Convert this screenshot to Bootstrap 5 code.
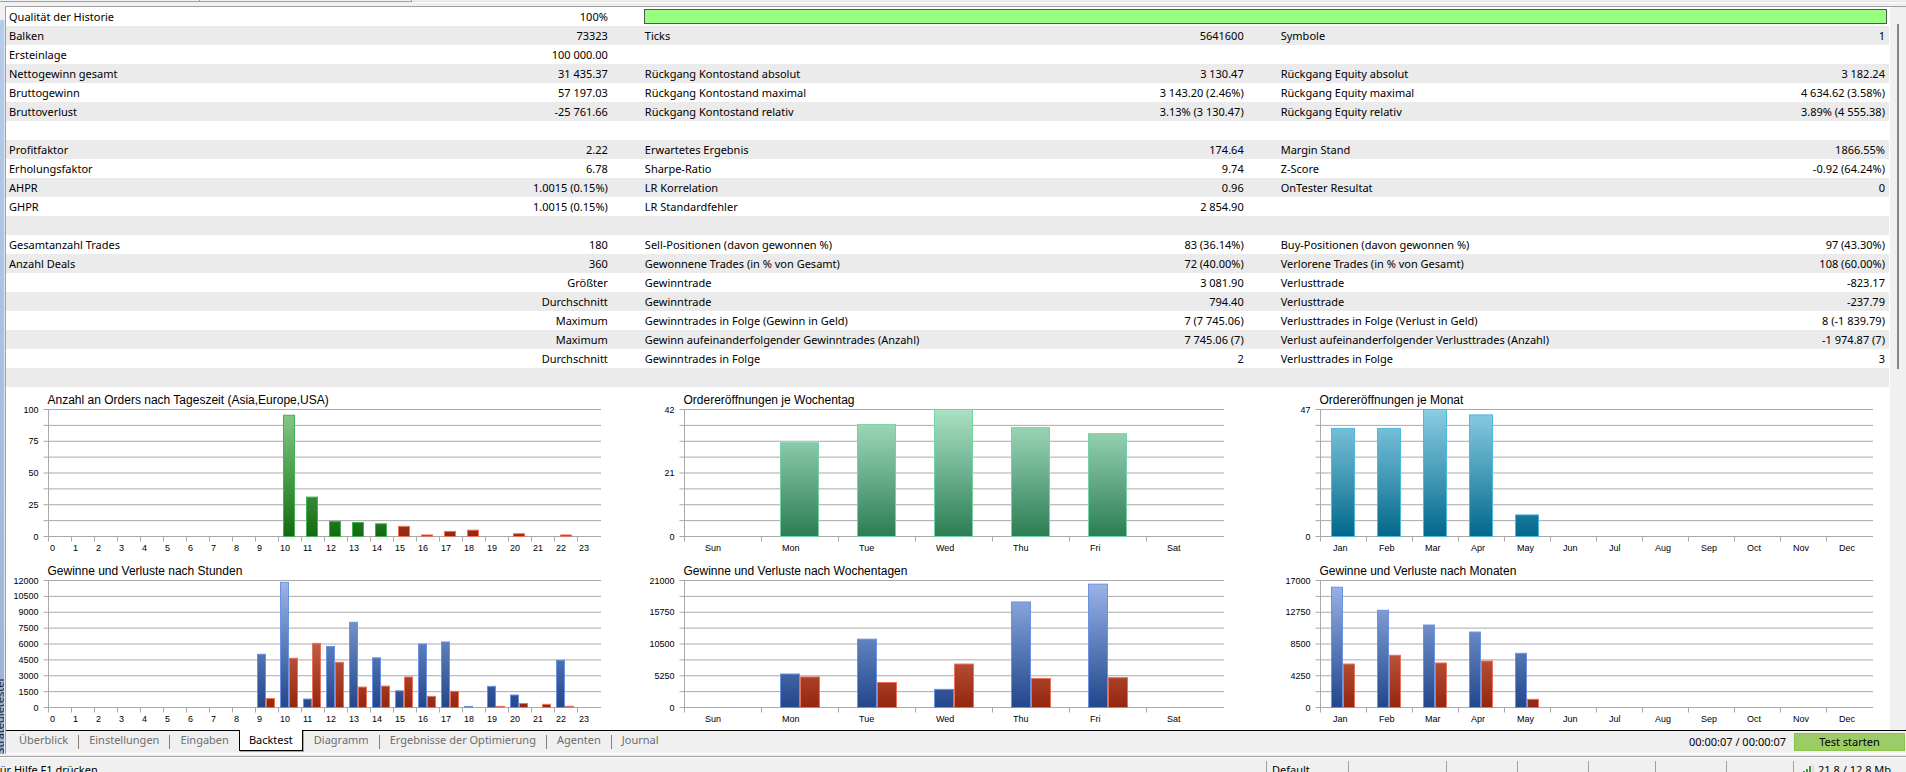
<!DOCTYPE html>
<html lang="de">
<head>
<meta charset="utf-8">
<meta name="viewport" content="width=device-width, initial-scale=1">
<title>Strategietester – Backtest</title>
<link href="https://cdn.jsdelivr.net/npm/bootstrap@5.3.0/dist/css/bootstrap.min.css" rel="stylesheet">
<style>
  :root { --face: #f0f0f0; --line: #a0a0a0; --ui: "Noto Sans", "Open Sans", sans-serif; }
  body { background: var(--face); color: #000; font-family: var(--ui); font-size: 11px; line-height: 19px; overflow: hidden; }
  .top-strip { height: 6px; }
  .top-strip .strip-tab { height: 2px; border-bottom: 1px solid var(--line); border-right: 1px solid var(--line); }
  .top-strip .tab-a { width: 200px; }
  .top-strip .tab-b { width: 212px; }
  .top-strip .strip-rest { height: 3px; border-bottom: 1px solid #fff; box-shadow: inset 0 -1px #e0e0e0; }
  .side-title { width: 5px; margin-top: 14px; border-right: 1px solid #dfe6ee; background: linear-gradient(#b4cdec, #a5bedd 60%, #9bb3d1); overflow: hidden; }
  .side-title span { writing-mode: vertical-rl; transform: rotate(180deg); white-space: nowrap; color: #10243c; margin-left: -10px; }
  .tester { min-width: 0; border-left: 1px solid var(--line); border-top: 1px solid var(--line); }
  .report-sheet { background: #fff; min-width: 0; padding-bottom: 1px; }
  .stats { table-layout: fixed; width: 100%; margin: 0; border-right: 1px solid #fff; border-collapse: collapse; }
  .stats tr:nth-child(even) { background: #ebebeb; }
  .stats td { height: 19px; padding: 0 0 0 3px; white-space: nowrap; overflow: visible; }
  .stats td.num { text-align: right; padding: 0 34px 0 0; }
  .stats tr:not(:first-child) td.num:last-child { padding-right: 4px; }
  .stats td.quality { padding: 0 2px; }
  .quality .progress { height: 15px; border: 1px solid #555; border-radius: 0; background: #fff; }
  .quality .progress-bar { background: #98ff80; }
  .c-label { width: 20%; }
  .c-num { width: 13.76%; }
  .c-last { width: 12.48%; }
  .chart-col { width: 33.76%; }
  .chart-col:last-child { width: 32.48%; }
  .plot { display: block; width: 100%; height: 171px; font-family: "Liberation Sans", Arial, sans-serif; font-size: 9px; }
  .plot .plot-title { font-size: 12px; }
  .scroll-track { width: 16px; padding: 17px 7px 0; background: var(--face); }
  .scroll-thumb { height: 345px; width: 2px; background: #868686; }
  .tab-row { height: 24px; border-top: 1px solid #000; border-bottom: 1px solid #fff; padding-left: 2px; }
  .tab-row ul { margin: 0; height: 20px; }
  .tab-row a { display: block; position: relative; padding: 0 10px 0 11px; color: #6d6d6d; text-decoration: none; line-height: 18px; height: 20px; }
  .tab-row li + li a::before { content: ""; position: absolute; left: 0; top: 4px; width: 1px; height: 14px; background: #808080; }
  .tab-row li a.active { background: #fff; color: #000; border: 1px solid #000; border-top: 0; margin-top: -1px; height: 21px; padding: 1px 9px 0; box-shadow: 1px 1px #a8a8a8; }
  .tab-row li a.active::before, .tab-row li.after-active a::before { display: none; }
  .start-btn { width: 111px; height: 18px; margin: 2px 1px 0 0; padding: 0; border: 1px solid #8bc34a; border-radius: 0; background: #9ccc65; color: #000; line-height: 16px; }
  .clock { line-height: 21px; }
  .status-bar { height: 26px; margin-top: 2px; border-top: 1px solid var(--line); box-shadow: inset 0 1px #fff; padding-top: 4px; line-height: 18px; }
  .status-bar > div { border-left: 1px solid var(--line); height: 22px; padding-left: 5px; white-space: nowrap; flex-shrink: 0; }
  .status-bar > .hint { border: 0; padding: 0; }
  .hint span { display: block; margin-left: -6px; }
  .pane-s { width: 67px; }
  .pane-m { width: 71px; }
  .pane-l { width: 82px; }
  .pane-xl { width: 98px; }
  .pane-net { width: 113px; }
</style>
</head>
<body>
<div class="top-strip d-flex">
  <div class="strip-tab tab-a"></div>
  <div class="strip-tab tab-b"></div>
  <div class="strip-rest flex-grow-1"></div>
</div>

<main class="d-flex">
  <div class="side-title d-flex flex-column flex-shrink-0 align-items-start justify-content-end"><span>Strategietester</span></div>
  <section class="tester flex-grow-1">
    <div class="d-flex">
      <div class="report-sheet flex-grow-1">
        <table class="stats">
          <colgroup><col class="c-label"><col class="c-num"><col class="c-label"><col class="c-num"><col class="c-label"><col class="c-last"></colgroup>
          <tbody>
            <tr><td>Qualität der Historie</td><td class="num">100%</td><td class="quality" colspan="4"><div class="progress" role="progressbar" aria-label="Qualität der Historie" aria-valuenow="100" aria-valuemin="0" aria-valuemax="100"><div class="progress-bar w-100"></div></div></td></tr>
            <tr><td>Balken</td><td class="num">73323</td><td>Ticks</td><td class="num">5641600</td><td>Symbole</td><td class="num">1</td></tr>
            <tr><td>Ersteinlage</td><td class="num">100 000.00</td><td></td><td></td><td></td><td></td></tr>
            <tr><td>Nettogewinn gesamt</td><td class="num">31 435.37</td><td>Rückgang Kontostand absolut</td><td class="num">3 130.47</td><td>Rückgang Equity absolut</td><td class="num">3 182.24</td></tr>
            <tr><td>Bruttogewinn</td><td class="num">57 197.03</td><td>Rückgang Kontostand maximal</td><td class="num">3 143.20 (2.46%)</td><td>Rückgang Equity maximal</td><td class="num">4 634.62 (3.58%)</td></tr>
            <tr><td>Bruttoverlust</td><td class="num">-25 761.66</td><td>Rückgang Kontostand relativ</td><td class="num">3.13% (3 130.47)</td><td>Rückgang Equity relativ</td><td class="num">3.89% (4 555.38)</td></tr>
            <tr><td colspan="6"></td></tr>
            <tr><td>Profitfaktor</td><td class="num">2.22</td><td>Erwartetes Ergebnis</td><td class="num">174.64</td><td>Margin Stand</td><td class="num">1866.55%</td></tr>
            <tr><td>Erholungsfaktor</td><td class="num">6.78</td><td>Sharpe-Ratio</td><td class="num">9.74</td><td>Z-Score</td><td class="num">-0.92 (64.24%)</td></tr>
            <tr><td>AHPR</td><td class="num">1.0015 (0.15%)</td><td>LR Korrelation</td><td class="num">0.96</td><td>OnTester Resultat</td><td class="num">0</td></tr>
            <tr><td>GHPR</td><td class="num">1.0015 (0.15%)</td><td>LR Standardfehler</td><td class="num">2 854.90</td><td></td><td></td></tr>
            <tr><td colspan="6"></td></tr>
            <tr><td>Gesamtanzahl Trades</td><td class="num">180</td><td>Sell-Positionen (davon gewonnen %)</td><td class="num">83 (36.14%)</td><td>Buy-Positionen (davon gewonnen %)</td><td class="num">97 (43.30%)</td></tr>
            <tr><td>Anzahl Deals</td><td class="num">360</td><td>Gewonnene Trades (in % von Gesamt)</td><td class="num">72 (40.00%)</td><td>Verlorene Trades (in % von Gesamt)</td><td class="num">108 (60.00%)</td></tr>
            <tr><td></td><td class="num">Größter</td><td>Gewinntrade</td><td class="num">3 081.90</td><td>Verlusttrade</td><td class="num">-823.17</td></tr>
            <tr><td></td><td class="num">Durchschnitt</td><td>Gewinntrade</td><td class="num">794.40</td><td>Verlusttrade</td><td class="num">-237.79</td></tr>
            <tr><td></td><td class="num">Maximum</td><td>Gewinntrades in Folge (Gewinn in Geld)</td><td class="num">7 (7 745.06)</td><td>Verlusttrades in Folge (Verlust in Geld)</td><td class="num">8 (-1 839.79)</td></tr>
            <tr><td></td><td class="num">Maximum</td><td>Gewinn aufeinanderfolgender Gewinntrades (Anzahl)</td><td class="num">7 745.06 (7)</td><td>Verlust aufeinanderfolgender Verlusttrades (Anzahl)</td><td class="num">-1 974.87 (7)</td></tr>
            <tr><td></td><td class="num">Durchschnitt</td><td>Gewinntrades in Folge</td><td class="num">2</td><td>Verlusttrades in Folge</td><td class="num">3</td></tr>
            <tr><td colspan="6"></td></tr>
          </tbody>
        </table>
        <div class="d-flex">
          <div class="chart-col"><svg class="plot" id="hourOrders"></svg><svg class="plot" id="hourProfit"></svg></div>
          <div class="chart-col"><svg class="plot" id="dayOrders"></svg><svg class="plot" id="dayProfit"></svg></div>
          <div class="chart-col"><svg class="plot" id="monthOrders"></svg><svg class="plot" id="monthProfit"></svg></div>
        </div>
      </div>
      <div class="scroll-track flex-shrink-0"><div class="scroll-thumb"></div></div>
    </div>

    <nav class="tab-row d-flex">
      <ul class="list-unstyled d-flex">
        <li><a href="#">Überblick</a></li>
        <li><a href="#">Einstellungen</a></li>
        <li><a href="#">Eingaben</a></li>
        <li><a href="#" class="active" aria-current="page">Backtest</a></li>
        <li class="after-active"><a href="#">Diagramm</a></li>
        <li><a href="#">Ergebnisse der Optimierung</a></li>
        <li><a href="#">Agenten</a></li>
        <li><a href="#">Journal</a></li>
      </ul>
      <div class="clock ms-auto me-2">00:00:07 / 00:00:07</div>
      <button type="button" class="start-btn">Test starten</button>
    </nav>
  </section>
</main>

<footer class="status-bar d-flex">
  <div class="hint flex-grow-1"><span>Für Hilfe F1 drücken</span></div>
  <div class="pane-l">Default</div>
  <div class="pane-xl"></div>
  <div class="pane-m"></div>
  <div class="pane-m"></div>
  <div class="pane-s"></div>
  <div class="pane-m"></div>
  <div class="pane-s"></div>
  <div class="pane-net d-flex">
    <svg class="mx-1 mt-1 flex-shrink-0" width="11" height="11" aria-hidden="true"><path d="M0 6h2v5H0zM3 4h2v7H3zM6 1h2v10H6z" fill="#3c9a46"/><path d="M9 0h2v11H9z" fill="#dcdcdc"/></svg>
    <span>21.8 / 12.8 Mb</span>
  </div>
</footer>

<script src="https://cdn.jsdelivr.net/npm/bootstrap@5.3.0/dist/js/bootstrap.bundle.min.js"></script>
<script>
  const NS = 'http://www.w3.org/2000/svg';
  const palettes = {
    green: { stops: ['#8cc88c', '#4aa04c', '#12690f'], edge: '#46b058' },
    mint:  { stops: ['#aae2c2', '#6cb090', '#2b7d52'], edge: '#74d2a4' },
    teal:  { stops: ['#8acde6', '#479cb8', '#01678a'], edge: '#4cb9dc' },
    blue:  { stops: ['#9fb6e8', '#5c7ebc', '#22468a'], edge: '#6a92e2' },
    red:   { stops: ['#e8a08c', '#c05c44', '#96260e'], edge: '#e8725a' }
  };
  const hours = Array.from({ length: 24 }, (_, h) => String(h));
  const days = ['Sun', 'Mon', 'Tue', 'Wed', 'Thu', 'Fri', 'Sat'];
  const months = ['Jan', 'Feb', 'Mar', 'Apr', 'May', 'Jun', 'Jul', 'Aug', 'Sep', 'Oct', 'Nov', 'Dec'];
  const zeros = n => Array(n).fill(0);

  /* labelEvery: a value on every n-th grid line; inset: first bar from slot edge; fill: share of slot covered */
  const charts = [
    { id: 'hourOrders', title: 'Anzahl an Orders nach Tageszeit (Asia,Europe,USA)', cats: hours, max: 100, labelEvery: 2, right: 41, inset: .22, fill: .52, catPad: 2,
      series: [{ hue: 'green', data: [...zeros(10), 95.5, 31, 12, 11, 10] }, { hue: 'red', data: [...zeros(15), 8, 1.2, 4, 5, 0, 2.2, 0, 1.2] }], stacked: true },
    { id: 'hourProfit', title: 'Gewinne und Verluste nach Stunden', cats: hours, max: 12000, labelEvery: 1, right: 41, inset: .07, fill: .78, catPad: 2,
      series: [{ hue: 'blue', data: [...zeros(9), 5030, 11830, 800, 5760, 8050, 4690, 1575, 6000, 6190, 100, 2000, 1180, 0, 4460] },
               { hue: 'red', data: [...zeros(9), 850, 4650, 6060, 4270, 1930, 2020, 2880, 1050, 1530, 0, 110, 380, 300, 110] }] },
    { id: 'dayOrders', title: 'Ordereröffnungen je Wochentag', cats: days, max: 42, labelEvery: 4, right: 54, inset: .24, fill: .51, catPad: 21,
      series: [{ hue: 'mint', data: [0, 31, 37, 42, 36, 34] }] },
    { id: 'dayProfit', title: 'Gewinne und Verluste nach Wochentagen', cats: days, max: 21000, labelEvery: 2, right: 54, inset: .24, fill: .51, catPad: 21,
      series: [{ hue: 'blue', data: [0, 5540, 11300, 3000, 17450, 20400] }, { hue: 'red', data: [0, 5050, 4130, 7190, 4800, 4930] }] },
    { id: 'monthOrders', title: 'Ordereröffnungen je Monat', cats: months, max: 47, labelEvery: 8, right: 17, inset: .23, fill: .52, catPad: 13,
      series: [{ hue: 'teal', data: [40, 40, 47, 45, 8] }] },
    { id: 'monthProfit', title: 'Gewinne und Verluste nach Monaten', cats: months, max: 17000, labelEvery: 2, right: 17, inset: .23, fill: .52, catPad: 13,
      series: [{ hue: 'blue', data: [16100, 13010, 11040, 10100, 7250] }, { hue: 'red', data: [5820, 6990, 5960, 6220, 1095] }] }
  ];

  function add(parent, tag, attrs, text) {
    const el = document.createElementNS(NS, tag);
    for (const k in attrs) el.setAttribute(k, attrs[k]);
    if (text !== undefined) el.textContent = text;
    parent.appendChild(el);
    return el;
  }

  function draw(c) {
    const svg = document.getElementById(c.id);
    svg.replaceChildren();
    const left = 42.5, top = 22.5, height = 127, base = top + height;
    const end = Math.round(svg.clientWidth) - c.right;
    const slot = (end - left) / c.cats.length;

    const defs = add(svg, 'defs', {});
    c.series.forEach(s => {
      const g = add(defs, 'linearGradient', { id: c.id + s.hue, gradientUnits: 'userSpaceOnUse', x1: 0, x2: 0, y1: top, y2: base });
      palettes[s.hue].stops.forEach((col, i) => add(g, 'stop', { offset: i / 2, 'stop-color': col }));
    });

    add(svg, 'text', { x: left - 1, y: 17, class: 'plot-title' }, c.title);
    for (let i = 0; i <= 8; i++) {
      const y = top + height * i / 8;
      add(svg, 'line', { x1: left - 5, x2: end, y1: y, y2: y, stroke: '#a9a9a9' });
      if (i % c.labelEvery === 0)
        add(svg, 'text', { x: left - 10, y: Math.round(y + 3), 'text-anchor': 'end' }, c.max * (8 - i) / 8);
    }
    add(svg, 'line', { x1: left, x2: left, y1: top, y2: base + 5, stroke: '#a9a9a9' });
    c.cats.forEach((name, i) => {
      const x = Math.floor(left + slot * i);
      if (i) add(svg, 'line', { x1: x + .5, x2: x + .5, y1: base, y2: base + 5, stroke: '#a9a9a9' });
      add(svg, 'text', { x: x + c.catPad, y: 164 }, name);
    });

    const groups = c.stacked ? 1 : c.series.length;
    const w = Math.round(slot * c.fill / groups);
    c.series.forEach((s, k) => s.data.forEach((v, i) => {
      if (!v) return;
      const x = Math.floor(left + slot * (i + c.inset)) + (c.stacked ? 0 : k * w);
      const h = Math.max(1, height * v / c.max);
      add(svg, 'rect', { x: x + .5, y: base - h, width: w - 1, height: h, fill: `url(#${c.id}${s.hue})`, stroke: palettes[s.hue].edge });
    }));
  }

  const drawAll = () => charts.forEach(draw);
  drawAll();
  window.addEventListener('resize', drawAll);
</script>
</body>
</html>
